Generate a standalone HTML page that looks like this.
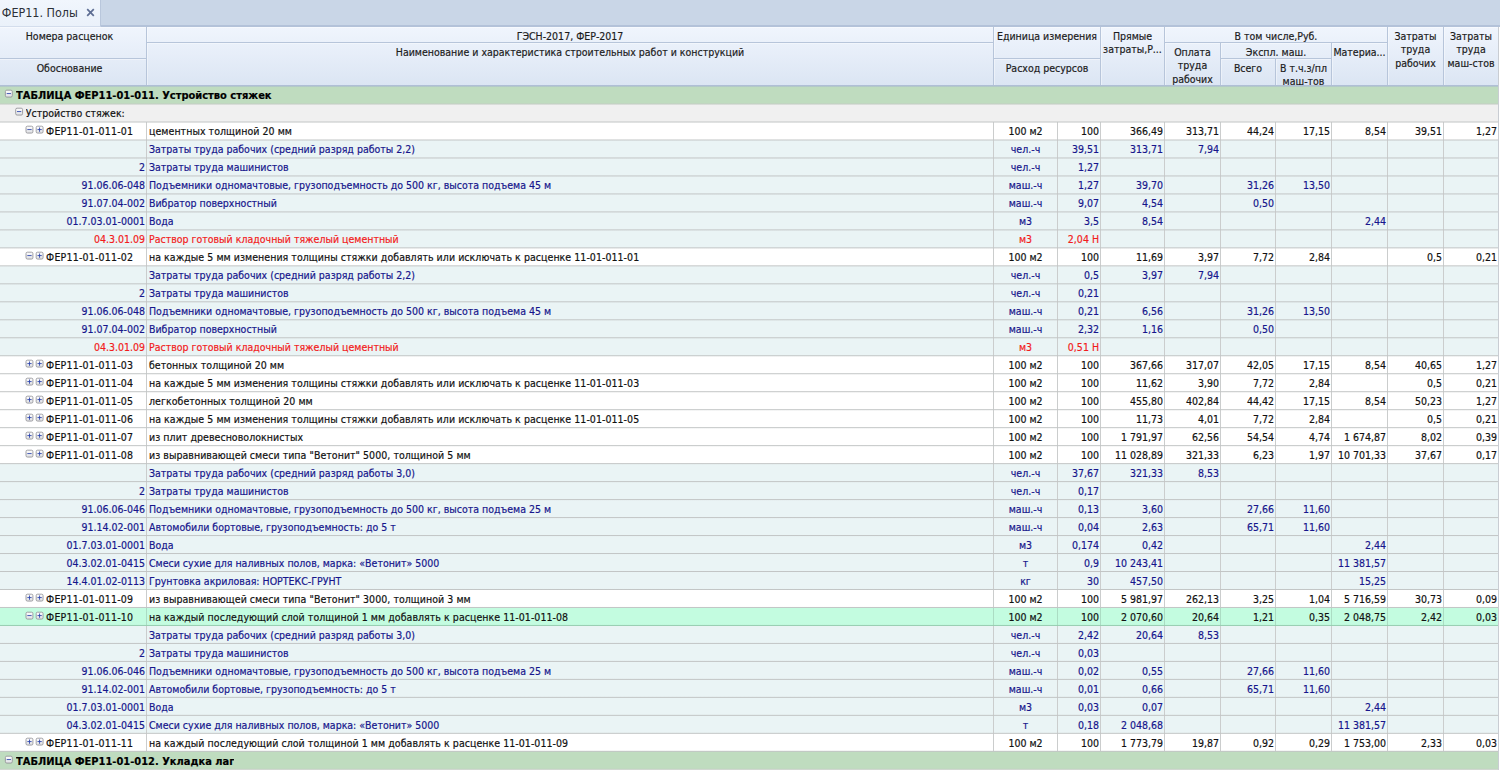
<!DOCTYPE html>
<html lang="ru"><head><meta charset="utf-8"><title>ФЕР11. Полы</title>
<style>
html,body{margin:0;padding:0}
html{width:1500px;height:770px;overflow:hidden}
body{-webkit-text-stroke:.18px currentColor;width:1500px;height:770px;overflow:hidden;position:relative;background:#fff;font-family:"DejaVu Sans Condensed","Liberation Sans",sans-serif;font-size:10.5px;color:#111}
div,span,b,i{box-sizing:border-box}
.tabbar{position:absolute;left:0;top:0;width:1500px;height:27px;background:#c9d6e7;border-bottom:2px solid #b3c2d9}
.tab{position:absolute;left:0;top:0;width:101px;height:27px;background:linear-gradient(#f1f6fd,#eaf1fa);border-right:1px solid #b9c7dc;border-bottom:1px solid #d3ddec;font-size:12.45px;-webkit-text-stroke:0;color:#2c3038;line-height:25px;padding-left:1.8px;white-space:nowrap}
.tab .x{position:absolute;left:86px;top:8px;width:9px;height:9px}
.hdr{position:absolute;left:0;top:27px;width:1499px;height:59px;background:linear-gradient(#f0f5fd,#dbe5f3)}
.hc{position:absolute;text-align:center;line-height:13.7px;padding-top:2.5px;white-space:nowrap;overflow:hidden;color:#1c1c1c;border-right:1px solid #b7c5da;border-bottom:1px solid #b7c5da;box-shadow:inset 1px 1px 0 rgba(255,255,255,.4)}
.row{position:absolute;left:0;width:1499px;white-space:nowrap}
.row.g{background:#bfdcbf;font-weight:bold;font-size:11px;color:#000}
.row.s{background:#f0f0f0}
.row.m{background:#fff}
.row.r,.row.x{background:#eaf4f5}
.row.r{color:#16168c}
.row.x{color:#f21c1c}
.row.h{background:#c3fce0}
.c{position:absolute;top:0;bottom:0;overflow:hidden;border-right:1px solid #cbcdcd}
.row.h .c{border-right-color:#abdcc3}
.row.m .al,.row.h .al{letter-spacing:.05px}
.t{position:absolute;top:0;bottom:0;overflow:hidden}
.ar{text-align:right;padding-right:1px}
.ac{text-align:center}
.al{text-align:left;padding-left:2px}
.ic{position:absolute;display:block;overflow:visible}
.hl{position:absolute;left:0;width:1499px;height:2px}
.vr{position:absolute;left:1498px;top:27px;width:1px;height:743px;background:#c9cdd3}
</style></head><body>

<svg width="0" height="0" style="position:absolute"><defs><linearGradient id="ig" x1="0" y1="0" x2="0" y2="1"><stop offset="0" stop-color="#ffffff"/><stop offset="1" stop-color="#dfe0e3"/></linearGradient></defs></svg>
<div class="tabbar"></div>
<div class="tab">ФЕР11. Полы<svg class="x" viewBox="0 0 9 9"><path d="M1.2 1.2L7.8 7.8M7.8 1.2L1.2 7.8" stroke="#5d6d93" stroke-width="1.7" fill="none"/></svg></div>
<div class="hdr">
<div class="hc" style="left:0px;top:0px;width:147px;height:32px;padding-right:7px;box-shadow:inset 0 1px 0 rgba(255,255,255,.4)">Номера расценок</div>
<div class="hc" style="left:0px;top:32px;width:147px;height:27px;padding-right:7px;box-shadow:inset 0 1px 0 rgba(255,255,255,.4)">Обоснование</div>
<div class="hc" style="left:147px;top:0px;width:847px;height:16px;">ГЭСН-2017, ФЕР-2017</div>
<div class="hc" style="left:147px;top:16px;width:847px;height:43px;">Наименование и характеристика строительных работ и конструкций</div>
<div class="hc" style="left:994px;top:0px;width:107px;height:32px;">Единица измерения</div>
<div class="hc" style="left:994px;top:32px;width:107px;height:27px;">Расход ресурсов</div>
<div class="hc" style="left:1101px;top:0px;width:64px;height:59px;">Прямые<br>затраты,Р...</div>
<div class="hc" style="left:1165px;top:0px;width:223px;height:16px;">В том числе,Руб.</div>
<div class="hc" style="left:1165px;top:16px;width:56px;height:43px;">Оплата<br>труда<br>рабочих</div>
<div class="hc" style="left:1221px;top:16px;width:111px;height:16px;">Экспл. маш.</div>
<div class="hc" style="left:1221px;top:32px;width:55px;height:27px;">Всего</div>
<div class="hc" style="left:1276px;top:32px;width:56px;height:27px;">В т.ч.з/пл<br>маш-тов</div>
<div class="hc" style="left:1332px;top:16px;width:56px;height:43px;">Материа...</div>
<div class="hc" style="left:1388px;top:0px;width:56px;height:59px;">Затраты<br>труда<br>рабочих</div>
<div class="hc" style="left:1444px;top:0px;width:55px;height:59px;">Затраты<br>труда<br>маш-стов</div>
</div>
<div class="row g" style="top:86px;height:18px;line-height:19px"><svg class="ic" style="left:4px;top:3px" width="10" height="10" viewBox="0 0 10 10"><g transform="translate(0.95 0.76) scale(.86)"><rect x=".5" y=".5" width="8" height="8" rx="1.6" fill="url(#ig)" stroke="#929296"/><rect x="2" y="4" width="5" height="1" fill="#2a42ac"/></g></svg><span class="t" style="left:16px">ТАБЛИЦА ФЕР11-01-011. Устройство стяжек</span></div>
<div class="row s" style="top:104px;height:18px;line-height:19px"><svg class="ic" style="left:15px;top:3px" width="10" height="10" viewBox="0 0 10 10"><g transform="translate(0.25 0.76) scale(.86)"><rect x=".5" y=".5" width="8" height="8" rx="1.6" fill="url(#ig)" stroke="#929296"/><rect x="2" y="4" width="5" height="1" fill="#2a42ac"/></g></svg><span class="t" style="left:25.8px">Устройство стяжек:</span></div>
<div class="row m" style="top:122px;height:18px;line-height:19px"><span class="c" style="left:0;width:147px"><svg class="ic" style="left:25px;top:3px" width="10" height="10" viewBox="0 0 10 10"><g transform="translate(0.6 0.76) scale(.86)"><rect x=".5" y=".5" width="8" height="8" rx="1.6" fill="url(#ig)" stroke="#929296"/><rect x="2" y="4" width="5" height="1" fill="#2a42ac"/></g></svg><svg class="ic" style="left:35px;top:3px" width="10" height="10" viewBox="0 0 10 10"><g transform="translate(0.75 0.76) scale(.86)"><rect x=".5" y=".5" width="8" height="8" rx="1.6" fill="url(#ig)" stroke="#929296"/><rect x="2" y="4" width="5" height="1" fill="#2a42ac"/><rect x="4" y="2" width="1" height="5" fill="#2a42ac"/></g></svg><span class="t" style="left:46.1px;letter-spacing:.2px">ФЕР11-01-011-01</span></span><span class="c al" style="left:147px;width:847px">цементных толщиной 20 мм</span><span class="c ac" style="left:994px;width:64px">100 м2</span><span class="c ar" style="left:1058px;width:43px">100</span><span class="c ar" style="left:1101px;width:64px">366,49</span><span class="c ar" style="left:1165px;width:56px">313,71</span><span class="c ar" style="left:1221px;width:55px">44,24</span><span class="c ar" style="left:1276px;width:56px">17,15</span><span class="c ar" style="left:1332px;width:56px">8,54</span><span class="c ar" style="left:1388px;width:56px">39,51</span><span class="c ar" style="left:1444px;width:55px">1,27</span></div>
<div class="row r" style="top:140px;height:18px;line-height:19px"><span class="c ar" style="left:0px;width:147px"></span><span class="c al" style="left:147px;width:847px">Затраты труда рабочих (средний разряд работы 2,2)</span><span class="c ac" style="left:994px;width:64px">чел.-ч</span><span class="c ar" style="left:1058px;width:43px">39,51</span><span class="c ar" style="left:1101px;width:64px">313,71</span><span class="c ar" style="left:1165px;width:56px">7,94</span><span class="c ar" style="left:1221px;width:55px"></span><span class="c ar" style="left:1276px;width:56px"></span><span class="c ar" style="left:1332px;width:56px"></span><span class="c ar" style="left:1388px;width:56px"></span><span class="c ar" style="left:1444px;width:55px"></span></div>
<div class="row r" style="top:158px;height:18px;line-height:19px"><span class="c ar" style="left:0px;width:147px">2</span><span class="c al" style="left:147px;width:847px">Затраты труда машинистов</span><span class="c ac" style="left:994px;width:64px">чел.-ч</span><span class="c ar" style="left:1058px;width:43px">1,27</span><span class="c ar" style="left:1101px;width:64px"></span><span class="c ar" style="left:1165px;width:56px"></span><span class="c ar" style="left:1221px;width:55px"></span><span class="c ar" style="left:1276px;width:56px"></span><span class="c ar" style="left:1332px;width:56px"></span><span class="c ar" style="left:1388px;width:56px"></span><span class="c ar" style="left:1444px;width:55px"></span></div>
<div class="row r" style="top:176px;height:18px;line-height:19px"><span class="c ar" style="left:0px;width:147px">91.06.06-048</span><span class="c al" style="left:147px;width:847px">Подъемники одномачтовые, грузоподъемность до 500 кг, высота подъема 45 м</span><span class="c ac" style="left:994px;width:64px">маш.-ч</span><span class="c ar" style="left:1058px;width:43px">1,27</span><span class="c ar" style="left:1101px;width:64px">39,70</span><span class="c ar" style="left:1165px;width:56px"></span><span class="c ar" style="left:1221px;width:55px">31,26</span><span class="c ar" style="left:1276px;width:56px">13,50</span><span class="c ar" style="left:1332px;width:56px"></span><span class="c ar" style="left:1388px;width:56px"></span><span class="c ar" style="left:1444px;width:55px"></span></div>
<div class="row r" style="top:194px;height:18px;line-height:19px"><span class="c ar" style="left:0px;width:147px">91.07.04-002</span><span class="c al" style="left:147px;width:847px">Вибратор поверхностный</span><span class="c ac" style="left:994px;width:64px">маш.-ч</span><span class="c ar" style="left:1058px;width:43px">9,07</span><span class="c ar" style="left:1101px;width:64px">4,54</span><span class="c ar" style="left:1165px;width:56px"></span><span class="c ar" style="left:1221px;width:55px">0,50</span><span class="c ar" style="left:1276px;width:56px"></span><span class="c ar" style="left:1332px;width:56px"></span><span class="c ar" style="left:1388px;width:56px"></span><span class="c ar" style="left:1444px;width:55px"></span></div>
<div class="row r" style="top:212px;height:18px;line-height:19px"><span class="c ar" style="left:0px;width:147px">01.7.03.01-0001</span><span class="c al" style="left:147px;width:847px">Вода</span><span class="c ac" style="left:994px;width:64px">м3</span><span class="c ar" style="left:1058px;width:43px">3,5</span><span class="c ar" style="left:1101px;width:64px">8,54</span><span class="c ar" style="left:1165px;width:56px"></span><span class="c ar" style="left:1221px;width:55px"></span><span class="c ar" style="left:1276px;width:56px"></span><span class="c ar" style="left:1332px;width:56px">2,44</span><span class="c ar" style="left:1388px;width:56px"></span><span class="c ar" style="left:1444px;width:55px"></span></div>
<div class="row x" style="top:230px;height:18px;line-height:19px"><span class="c ar" style="left:0px;width:147px">04.3.01.09</span><span class="c al" style="left:147px;width:847px">Раствор готовый кладочный тяжелый цементный</span><span class="c ac" style="left:994px;width:64px">м3</span><span class="c ar" style="left:1058px;width:43px">2,04 Н</span><span class="c ar" style="left:1101px;width:64px"></span><span class="c ar" style="left:1165px;width:56px"></span><span class="c ar" style="left:1221px;width:55px"></span><span class="c ar" style="left:1276px;width:56px"></span><span class="c ar" style="left:1332px;width:56px"></span><span class="c ar" style="left:1388px;width:56px"></span><span class="c ar" style="left:1444px;width:55px"></span></div>
<div class="row m" style="top:248px;height:18px;line-height:19px"><span class="c" style="left:0;width:147px"><svg class="ic" style="left:25px;top:3px" width="10" height="10" viewBox="0 0 10 10"><g transform="translate(0.6 0.76) scale(.86)"><rect x=".5" y=".5" width="8" height="8" rx="1.6" fill="url(#ig)" stroke="#929296"/><rect x="2" y="4" width="5" height="1" fill="#2a42ac"/></g></svg><svg class="ic" style="left:35px;top:3px" width="10" height="10" viewBox="0 0 10 10"><g transform="translate(0.75 0.76) scale(.86)"><rect x=".5" y=".5" width="8" height="8" rx="1.6" fill="url(#ig)" stroke="#929296"/><rect x="2" y="4" width="5" height="1" fill="#2a42ac"/><rect x="4" y="2" width="1" height="5" fill="#2a42ac"/></g></svg><span class="t" style="left:46.1px;letter-spacing:.2px">ФЕР11-01-011-02</span></span><span class="c al" style="left:147px;width:847px">на каждые 5 мм изменения толщины стяжки добавлять или исключать к расценке 11-01-011-01</span><span class="c ac" style="left:994px;width:64px">100 м2</span><span class="c ar" style="left:1058px;width:43px">100</span><span class="c ar" style="left:1101px;width:64px">11,69</span><span class="c ar" style="left:1165px;width:56px">3,97</span><span class="c ar" style="left:1221px;width:55px">7,72</span><span class="c ar" style="left:1276px;width:56px">2,84</span><span class="c ar" style="left:1332px;width:56px"></span><span class="c ar" style="left:1388px;width:56px">0,5</span><span class="c ar" style="left:1444px;width:55px">0,21</span></div>
<div class="row r" style="top:266px;height:18px;line-height:19px"><span class="c ar" style="left:0px;width:147px"></span><span class="c al" style="left:147px;width:847px">Затраты труда рабочих (средний разряд работы 2,2)</span><span class="c ac" style="left:994px;width:64px">чел.-ч</span><span class="c ar" style="left:1058px;width:43px">0,5</span><span class="c ar" style="left:1101px;width:64px">3,97</span><span class="c ar" style="left:1165px;width:56px">7,94</span><span class="c ar" style="left:1221px;width:55px"></span><span class="c ar" style="left:1276px;width:56px"></span><span class="c ar" style="left:1332px;width:56px"></span><span class="c ar" style="left:1388px;width:56px"></span><span class="c ar" style="left:1444px;width:55px"></span></div>
<div class="row r" style="top:284px;height:18px;line-height:19px"><span class="c ar" style="left:0px;width:147px">2</span><span class="c al" style="left:147px;width:847px">Затраты труда машинистов</span><span class="c ac" style="left:994px;width:64px">чел.-ч</span><span class="c ar" style="left:1058px;width:43px">0,21</span><span class="c ar" style="left:1101px;width:64px"></span><span class="c ar" style="left:1165px;width:56px"></span><span class="c ar" style="left:1221px;width:55px"></span><span class="c ar" style="left:1276px;width:56px"></span><span class="c ar" style="left:1332px;width:56px"></span><span class="c ar" style="left:1388px;width:56px"></span><span class="c ar" style="left:1444px;width:55px"></span></div>
<div class="row r" style="top:302px;height:18px;line-height:19px"><span class="c ar" style="left:0px;width:147px">91.06.06-048</span><span class="c al" style="left:147px;width:847px">Подъемники одномачтовые, грузоподъемность до 500 кг, высота подъема 45 м</span><span class="c ac" style="left:994px;width:64px">маш.-ч</span><span class="c ar" style="left:1058px;width:43px">0,21</span><span class="c ar" style="left:1101px;width:64px">6,56</span><span class="c ar" style="left:1165px;width:56px"></span><span class="c ar" style="left:1221px;width:55px">31,26</span><span class="c ar" style="left:1276px;width:56px">13,50</span><span class="c ar" style="left:1332px;width:56px"></span><span class="c ar" style="left:1388px;width:56px"></span><span class="c ar" style="left:1444px;width:55px"></span></div>
<div class="row r" style="top:320px;height:18px;line-height:19px"><span class="c ar" style="left:0px;width:147px">91.07.04-002</span><span class="c al" style="left:147px;width:847px">Вибратор поверхностный</span><span class="c ac" style="left:994px;width:64px">маш.-ч</span><span class="c ar" style="left:1058px;width:43px">2,32</span><span class="c ar" style="left:1101px;width:64px">1,16</span><span class="c ar" style="left:1165px;width:56px"></span><span class="c ar" style="left:1221px;width:55px">0,50</span><span class="c ar" style="left:1276px;width:56px"></span><span class="c ar" style="left:1332px;width:56px"></span><span class="c ar" style="left:1388px;width:56px"></span><span class="c ar" style="left:1444px;width:55px"></span></div>
<div class="row x" style="top:338px;height:18px;line-height:19px"><span class="c ar" style="left:0px;width:147px">04.3.01.09</span><span class="c al" style="left:147px;width:847px">Раствор готовый кладочный тяжелый цементный</span><span class="c ac" style="left:994px;width:64px">м3</span><span class="c ar" style="left:1058px;width:43px">0,51 Н</span><span class="c ar" style="left:1101px;width:64px"></span><span class="c ar" style="left:1165px;width:56px"></span><span class="c ar" style="left:1221px;width:55px"></span><span class="c ar" style="left:1276px;width:56px"></span><span class="c ar" style="left:1332px;width:56px"></span><span class="c ar" style="left:1388px;width:56px"></span><span class="c ar" style="left:1444px;width:55px"></span></div>
<div class="row m" style="top:356px;height:18px;line-height:19px"><span class="c" style="left:0;width:147px"><svg class="ic" style="left:25px;top:3px" width="10" height="10" viewBox="0 0 10 10"><g transform="translate(0.6 0.76) scale(.86)"><rect x=".5" y=".5" width="8" height="8" rx="1.6" fill="url(#ig)" stroke="#929296"/><rect x="2" y="4" width="5" height="1" fill="#2a42ac"/><rect x="4" y="2" width="1" height="5" fill="#2a42ac"/></g></svg><svg class="ic" style="left:35px;top:3px" width="10" height="10" viewBox="0 0 10 10"><g transform="translate(0.75 0.76) scale(.86)"><rect x=".5" y=".5" width="8" height="8" rx="1.6" fill="url(#ig)" stroke="#929296"/><rect x="2" y="4" width="5" height="1" fill="#2a42ac"/><rect x="4" y="2" width="1" height="5" fill="#2a42ac"/></g></svg><span class="t" style="left:46.1px;letter-spacing:.2px">ФЕР11-01-011-03</span></span><span class="c al" style="left:147px;width:847px">бетонных толщиной 20 мм</span><span class="c ac" style="left:994px;width:64px">100 м2</span><span class="c ar" style="left:1058px;width:43px">100</span><span class="c ar" style="left:1101px;width:64px">367,66</span><span class="c ar" style="left:1165px;width:56px">317,07</span><span class="c ar" style="left:1221px;width:55px">42,05</span><span class="c ar" style="left:1276px;width:56px">17,15</span><span class="c ar" style="left:1332px;width:56px">8,54</span><span class="c ar" style="left:1388px;width:56px">40,65</span><span class="c ar" style="left:1444px;width:55px">1,27</span></div>
<div class="row m" style="top:374px;height:18px;line-height:19px"><span class="c" style="left:0;width:147px"><svg class="ic" style="left:25px;top:3px" width="10" height="10" viewBox="0 0 10 10"><g transform="translate(0.6 0.76) scale(.86)"><rect x=".5" y=".5" width="8" height="8" rx="1.6" fill="url(#ig)" stroke="#929296"/><rect x="2" y="4" width="5" height="1" fill="#2a42ac"/><rect x="4" y="2" width="1" height="5" fill="#2a42ac"/></g></svg><svg class="ic" style="left:35px;top:3px" width="10" height="10" viewBox="0 0 10 10"><g transform="translate(0.75 0.76) scale(.86)"><rect x=".5" y=".5" width="8" height="8" rx="1.6" fill="url(#ig)" stroke="#929296"/><rect x="2" y="4" width="5" height="1" fill="#2a42ac"/><rect x="4" y="2" width="1" height="5" fill="#2a42ac"/></g></svg><span class="t" style="left:46.1px;letter-spacing:.2px">ФЕР11-01-011-04</span></span><span class="c al" style="left:147px;width:847px">на каждые 5 мм изменения толщины стяжки добавлять или исключать к расценке 11-01-011-03</span><span class="c ac" style="left:994px;width:64px">100 м2</span><span class="c ar" style="left:1058px;width:43px">100</span><span class="c ar" style="left:1101px;width:64px">11,62</span><span class="c ar" style="left:1165px;width:56px">3,90</span><span class="c ar" style="left:1221px;width:55px">7,72</span><span class="c ar" style="left:1276px;width:56px">2,84</span><span class="c ar" style="left:1332px;width:56px"></span><span class="c ar" style="left:1388px;width:56px">0,5</span><span class="c ar" style="left:1444px;width:55px">0,21</span></div>
<div class="row m" style="top:392px;height:18px;line-height:19px"><span class="c" style="left:0;width:147px"><svg class="ic" style="left:25px;top:3px" width="10" height="10" viewBox="0 0 10 10"><g transform="translate(0.6 0.76) scale(.86)"><rect x=".5" y=".5" width="8" height="8" rx="1.6" fill="url(#ig)" stroke="#929296"/><rect x="2" y="4" width="5" height="1" fill="#2a42ac"/><rect x="4" y="2" width="1" height="5" fill="#2a42ac"/></g></svg><svg class="ic" style="left:35px;top:3px" width="10" height="10" viewBox="0 0 10 10"><g transform="translate(0.75 0.76) scale(.86)"><rect x=".5" y=".5" width="8" height="8" rx="1.6" fill="url(#ig)" stroke="#929296"/><rect x="2" y="4" width="5" height="1" fill="#2a42ac"/><rect x="4" y="2" width="1" height="5" fill="#2a42ac"/></g></svg><span class="t" style="left:46.1px;letter-spacing:.2px">ФЕР11-01-011-05</span></span><span class="c al" style="left:147px;width:847px">легкобетонных толщиной 20 мм</span><span class="c ac" style="left:994px;width:64px">100 м2</span><span class="c ar" style="left:1058px;width:43px">100</span><span class="c ar" style="left:1101px;width:64px">455,80</span><span class="c ar" style="left:1165px;width:56px">402,84</span><span class="c ar" style="left:1221px;width:55px">44,42</span><span class="c ar" style="left:1276px;width:56px">17,15</span><span class="c ar" style="left:1332px;width:56px">8,54</span><span class="c ar" style="left:1388px;width:56px">50,23</span><span class="c ar" style="left:1444px;width:55px">1,27</span></div>
<div class="row m" style="top:410px;height:18px;line-height:19px"><span class="c" style="left:0;width:147px"><svg class="ic" style="left:25px;top:3px" width="10" height="10" viewBox="0 0 10 10"><g transform="translate(0.6 0.76) scale(.86)"><rect x=".5" y=".5" width="8" height="8" rx="1.6" fill="url(#ig)" stroke="#929296"/><rect x="2" y="4" width="5" height="1" fill="#2a42ac"/><rect x="4" y="2" width="1" height="5" fill="#2a42ac"/></g></svg><svg class="ic" style="left:35px;top:3px" width="10" height="10" viewBox="0 0 10 10"><g transform="translate(0.75 0.76) scale(.86)"><rect x=".5" y=".5" width="8" height="8" rx="1.6" fill="url(#ig)" stroke="#929296"/><rect x="2" y="4" width="5" height="1" fill="#2a42ac"/><rect x="4" y="2" width="1" height="5" fill="#2a42ac"/></g></svg><span class="t" style="left:46.1px;letter-spacing:.2px">ФЕР11-01-011-06</span></span><span class="c al" style="left:147px;width:847px">на каждые 5 мм изменения толщины стяжки добавлять или исключать к расценке 11-01-011-05</span><span class="c ac" style="left:994px;width:64px">100 м2</span><span class="c ar" style="left:1058px;width:43px">100</span><span class="c ar" style="left:1101px;width:64px">11,73</span><span class="c ar" style="left:1165px;width:56px">4,01</span><span class="c ar" style="left:1221px;width:55px">7,72</span><span class="c ar" style="left:1276px;width:56px">2,84</span><span class="c ar" style="left:1332px;width:56px"></span><span class="c ar" style="left:1388px;width:56px">0,5</span><span class="c ar" style="left:1444px;width:55px">0,21</span></div>
<div class="row m" style="top:428px;height:18px;line-height:19px"><span class="c" style="left:0;width:147px"><svg class="ic" style="left:25px;top:3px" width="10" height="10" viewBox="0 0 10 10"><g transform="translate(0.6 0.76) scale(.86)"><rect x=".5" y=".5" width="8" height="8" rx="1.6" fill="url(#ig)" stroke="#929296"/><rect x="2" y="4" width="5" height="1" fill="#2a42ac"/><rect x="4" y="2" width="1" height="5" fill="#2a42ac"/></g></svg><svg class="ic" style="left:35px;top:3px" width="10" height="10" viewBox="0 0 10 10"><g transform="translate(0.75 0.76) scale(.86)"><rect x=".5" y=".5" width="8" height="8" rx="1.6" fill="url(#ig)" stroke="#929296"/><rect x="2" y="4" width="5" height="1" fill="#2a42ac"/><rect x="4" y="2" width="1" height="5" fill="#2a42ac"/></g></svg><span class="t" style="left:46.1px;letter-spacing:.2px">ФЕР11-01-011-07</span></span><span class="c al" style="left:147px;width:847px">из плит древесноволокнистых</span><span class="c ac" style="left:994px;width:64px">100 м2</span><span class="c ar" style="left:1058px;width:43px">100</span><span class="c ar" style="left:1101px;width:64px">1 791,97</span><span class="c ar" style="left:1165px;width:56px">62,56</span><span class="c ar" style="left:1221px;width:55px">54,54</span><span class="c ar" style="left:1276px;width:56px">4,74</span><span class="c ar" style="left:1332px;width:56px">1 674,87</span><span class="c ar" style="left:1388px;width:56px">8,02</span><span class="c ar" style="left:1444px;width:55px">0,39</span></div>
<div class="row m" style="top:446px;height:18px;line-height:19px"><span class="c" style="left:0;width:147px"><svg class="ic" style="left:25px;top:3px" width="10" height="10" viewBox="0 0 10 10"><g transform="translate(0.6 0.76) scale(.86)"><rect x=".5" y=".5" width="8" height="8" rx="1.6" fill="url(#ig)" stroke="#929296"/><rect x="2" y="4" width="5" height="1" fill="#2a42ac"/></g></svg><svg class="ic" style="left:35px;top:3px" width="10" height="10" viewBox="0 0 10 10"><g transform="translate(0.75 0.76) scale(.86)"><rect x=".5" y=".5" width="8" height="8" rx="1.6" fill="url(#ig)" stroke="#929296"/><rect x="2" y="4" width="5" height="1" fill="#2a42ac"/><rect x="4" y="2" width="1" height="5" fill="#2a42ac"/></g></svg><span class="t" style="left:46.1px;letter-spacing:.2px">ФЕР11-01-011-08</span></span><span class="c al" style="left:147px;width:847px">из выравнивающей смеси типа "Ветонит" 5000, толщиной 5 мм</span><span class="c ac" style="left:994px;width:64px">100 м2</span><span class="c ar" style="left:1058px;width:43px">100</span><span class="c ar" style="left:1101px;width:64px">11 028,89</span><span class="c ar" style="left:1165px;width:56px">321,33</span><span class="c ar" style="left:1221px;width:55px">6,23</span><span class="c ar" style="left:1276px;width:56px">1,97</span><span class="c ar" style="left:1332px;width:56px">10 701,33</span><span class="c ar" style="left:1388px;width:56px">37,67</span><span class="c ar" style="left:1444px;width:55px">0,17</span></div>
<div class="row r" style="top:464px;height:18px;line-height:19px"><span class="c ar" style="left:0px;width:147px"></span><span class="c al" style="left:147px;width:847px">Затраты труда рабочих (средний разряд работы 3,0)</span><span class="c ac" style="left:994px;width:64px">чел.-ч</span><span class="c ar" style="left:1058px;width:43px">37,67</span><span class="c ar" style="left:1101px;width:64px">321,33</span><span class="c ar" style="left:1165px;width:56px">8,53</span><span class="c ar" style="left:1221px;width:55px"></span><span class="c ar" style="left:1276px;width:56px"></span><span class="c ar" style="left:1332px;width:56px"></span><span class="c ar" style="left:1388px;width:56px"></span><span class="c ar" style="left:1444px;width:55px"></span></div>
<div class="row r" style="top:482px;height:18px;line-height:19px"><span class="c ar" style="left:0px;width:147px">2</span><span class="c al" style="left:147px;width:847px">Затраты труда машинистов</span><span class="c ac" style="left:994px;width:64px">чел.-ч</span><span class="c ar" style="left:1058px;width:43px">0,17</span><span class="c ar" style="left:1101px;width:64px"></span><span class="c ar" style="left:1165px;width:56px"></span><span class="c ar" style="left:1221px;width:55px"></span><span class="c ar" style="left:1276px;width:56px"></span><span class="c ar" style="left:1332px;width:56px"></span><span class="c ar" style="left:1388px;width:56px"></span><span class="c ar" style="left:1444px;width:55px"></span></div>
<div class="row r" style="top:500px;height:18px;line-height:19px"><span class="c ar" style="left:0px;width:147px">91.06.06-046</span><span class="c al" style="left:147px;width:847px">Подъемники одномачтовые, грузоподъемность до 500 кг, высота подъема 25 м</span><span class="c ac" style="left:994px;width:64px">маш.-ч</span><span class="c ar" style="left:1058px;width:43px">0,13</span><span class="c ar" style="left:1101px;width:64px">3,60</span><span class="c ar" style="left:1165px;width:56px"></span><span class="c ar" style="left:1221px;width:55px">27,66</span><span class="c ar" style="left:1276px;width:56px">11,60</span><span class="c ar" style="left:1332px;width:56px"></span><span class="c ar" style="left:1388px;width:56px"></span><span class="c ar" style="left:1444px;width:55px"></span></div>
<div class="row r" style="top:518px;height:18px;line-height:19px"><span class="c ar" style="left:0px;width:147px">91.14.02-001</span><span class="c al" style="left:147px;width:847px">Автомобили бортовые, грузоподъемность: до 5 т</span><span class="c ac" style="left:994px;width:64px">маш.-ч</span><span class="c ar" style="left:1058px;width:43px">0,04</span><span class="c ar" style="left:1101px;width:64px">2,63</span><span class="c ar" style="left:1165px;width:56px"></span><span class="c ar" style="left:1221px;width:55px">65,71</span><span class="c ar" style="left:1276px;width:56px">11,60</span><span class="c ar" style="left:1332px;width:56px"></span><span class="c ar" style="left:1388px;width:56px"></span><span class="c ar" style="left:1444px;width:55px"></span></div>
<div class="row r" style="top:536px;height:18px;line-height:19px"><span class="c ar" style="left:0px;width:147px">01.7.03.01-0001</span><span class="c al" style="left:147px;width:847px">Вода</span><span class="c ac" style="left:994px;width:64px">м3</span><span class="c ar" style="left:1058px;width:43px">0,174</span><span class="c ar" style="left:1101px;width:64px">0,42</span><span class="c ar" style="left:1165px;width:56px"></span><span class="c ar" style="left:1221px;width:55px"></span><span class="c ar" style="left:1276px;width:56px"></span><span class="c ar" style="left:1332px;width:56px">2,44</span><span class="c ar" style="left:1388px;width:56px"></span><span class="c ar" style="left:1444px;width:55px"></span></div>
<div class="row r" style="top:554px;height:18px;line-height:19px"><span class="c ar" style="left:0px;width:147px">04.3.02.01-0415</span><span class="c al" style="left:147px;width:847px">Смеси сухие для наливных полов, марка: «Ветонит» 5000</span><span class="c ac" style="left:994px;width:64px">т</span><span class="c ar" style="left:1058px;width:43px">0,9</span><span class="c ar" style="left:1101px;width:64px">10 243,41</span><span class="c ar" style="left:1165px;width:56px"></span><span class="c ar" style="left:1221px;width:55px"></span><span class="c ar" style="left:1276px;width:56px"></span><span class="c ar" style="left:1332px;width:56px">11 381,57</span><span class="c ar" style="left:1388px;width:56px"></span><span class="c ar" style="left:1444px;width:55px"></span></div>
<div class="row r" style="top:572px;height:17px;line-height:19px"><span class="c ar" style="left:0px;width:147px">14.4.01.02-0113</span><span class="c al" style="left:147px;width:847px">Грунтовка акриловая: НОРТЕКС-ГРУНТ</span><span class="c ac" style="left:994px;width:64px">кг</span><span class="c ar" style="left:1058px;width:43px">30</span><span class="c ar" style="left:1101px;width:64px">457,50</span><span class="c ar" style="left:1165px;width:56px"></span><span class="c ar" style="left:1221px;width:55px"></span><span class="c ar" style="left:1276px;width:56px"></span><span class="c ar" style="left:1332px;width:56px">15,25</span><span class="c ar" style="left:1388px;width:56px"></span><span class="c ar" style="left:1444px;width:55px"></span></div>
<div class="row m" style="top:589px;height:18px;line-height:21px"><span class="c" style="left:0;width:147px"><svg class="ic" style="left:25px;top:4px" width="10" height="10" viewBox="0 0 10 10"><g transform="translate(0.6 0.76) scale(.86)"><rect x=".5" y=".5" width="8" height="8" rx="1.6" fill="url(#ig)" stroke="#929296"/><rect x="2" y="4" width="5" height="1" fill="#2a42ac"/><rect x="4" y="2" width="1" height="5" fill="#2a42ac"/></g></svg><svg class="ic" style="left:35px;top:4px" width="10" height="10" viewBox="0 0 10 10"><g transform="translate(0.75 0.76) scale(.86)"><rect x=".5" y=".5" width="8" height="8" rx="1.6" fill="url(#ig)" stroke="#929296"/><rect x="2" y="4" width="5" height="1" fill="#2a42ac"/><rect x="4" y="2" width="1" height="5" fill="#2a42ac"/></g></svg><span class="t" style="left:46.1px;letter-spacing:.2px">ФЕР11-01-011-09</span></span><span class="c al" style="left:147px;width:847px">из выравнивающей смеси типа "Ветонит" 3000, толщиной 3 мм</span><span class="c ac" style="left:994px;width:64px">100 м2</span><span class="c ar" style="left:1058px;width:43px">100</span><span class="c ar" style="left:1101px;width:64px">5 981,97</span><span class="c ar" style="left:1165px;width:56px">262,13</span><span class="c ar" style="left:1221px;width:55px">3,25</span><span class="c ar" style="left:1276px;width:56px">1,04</span><span class="c ar" style="left:1332px;width:56px">5 716,59</span><span class="c ar" style="left:1388px;width:56px">30,73</span><span class="c ar" style="left:1444px;width:55px">0,09</span></div>
<div class="row h" style="top:607px;height:18px;line-height:21px"><span class="c" style="left:0;width:147px"><svg class="ic" style="left:25px;top:4px" width="10" height="10" viewBox="0 0 10 10"><g transform="translate(0.6 0.76) scale(.86)"><rect x=".5" y=".5" width="8" height="8" rx="1.6" fill="url(#ig)" stroke="#929296"/><rect x="2" y="4" width="5" height="1" fill="#2a42ac"/></g></svg><svg class="ic" style="left:35px;top:4px" width="10" height="10" viewBox="0 0 10 10"><g transform="translate(0.75 0.76) scale(.86)"><rect x=".5" y=".5" width="8" height="8" rx="1.6" fill="url(#ig)" stroke="#929296"/><rect x="2" y="4" width="5" height="1" fill="#2a42ac"/><rect x="4" y="2" width="1" height="5" fill="#2a42ac"/></g></svg><span class="t" style="left:46.1px;letter-spacing:.2px">ФЕР11-01-011-10</span></span><span class="c al" style="left:147px;width:847px">на каждый последующий слой толщиной 1 мм добавлять к расценке 11-01-011-08</span><span class="c ac" style="left:994px;width:64px">100 м2</span><span class="c ar" style="left:1058px;width:43px">100</span><span class="c ar" style="left:1101px;width:64px">2 070,60</span><span class="c ar" style="left:1165px;width:56px">20,64</span><span class="c ar" style="left:1221px;width:55px">1,21</span><span class="c ar" style="left:1276px;width:56px">0,35</span><span class="c ar" style="left:1332px;width:56px">2 048,75</span><span class="c ar" style="left:1388px;width:56px">2,42</span><span class="c ar" style="left:1444px;width:55px">0,03</span></div>
<div class="row r" style="top:625px;height:18px;line-height:21px"><span class="c ar" style="left:0px;width:147px"></span><span class="c al" style="left:147px;width:847px">Затраты труда рабочих (средний разряд работы 3,0)</span><span class="c ac" style="left:994px;width:64px">чел.-ч</span><span class="c ar" style="left:1058px;width:43px">2,42</span><span class="c ar" style="left:1101px;width:64px">20,64</span><span class="c ar" style="left:1165px;width:56px">8,53</span><span class="c ar" style="left:1221px;width:55px"></span><span class="c ar" style="left:1276px;width:56px"></span><span class="c ar" style="left:1332px;width:56px"></span><span class="c ar" style="left:1388px;width:56px"></span><span class="c ar" style="left:1444px;width:55px"></span></div>
<div class="row r" style="top:643px;height:18px;line-height:21px"><span class="c ar" style="left:0px;width:147px">2</span><span class="c al" style="left:147px;width:847px">Затраты труда машинистов</span><span class="c ac" style="left:994px;width:64px">чел.-ч</span><span class="c ar" style="left:1058px;width:43px">0,03</span><span class="c ar" style="left:1101px;width:64px"></span><span class="c ar" style="left:1165px;width:56px"></span><span class="c ar" style="left:1221px;width:55px"></span><span class="c ar" style="left:1276px;width:56px"></span><span class="c ar" style="left:1332px;width:56px"></span><span class="c ar" style="left:1388px;width:56px"></span><span class="c ar" style="left:1444px;width:55px"></span></div>
<div class="row r" style="top:661px;height:18px;line-height:21px"><span class="c ar" style="left:0px;width:147px">91.06.06-046</span><span class="c al" style="left:147px;width:847px">Подъемники одномачтовые, грузоподъемность до 500 кг, высота подъема 25 м</span><span class="c ac" style="left:994px;width:64px">маш.-ч</span><span class="c ar" style="left:1058px;width:43px">0,02</span><span class="c ar" style="left:1101px;width:64px">0,55</span><span class="c ar" style="left:1165px;width:56px"></span><span class="c ar" style="left:1221px;width:55px">27,66</span><span class="c ar" style="left:1276px;width:56px">11,60</span><span class="c ar" style="left:1332px;width:56px"></span><span class="c ar" style="left:1388px;width:56px"></span><span class="c ar" style="left:1444px;width:55px"></span></div>
<div class="row r" style="top:679px;height:18px;line-height:21px"><span class="c ar" style="left:0px;width:147px">91.14.02-001</span><span class="c al" style="left:147px;width:847px">Автомобили бортовые, грузоподъемность: до 5 т</span><span class="c ac" style="left:994px;width:64px">маш.-ч</span><span class="c ar" style="left:1058px;width:43px">0,01</span><span class="c ar" style="left:1101px;width:64px">0,66</span><span class="c ar" style="left:1165px;width:56px"></span><span class="c ar" style="left:1221px;width:55px">65,71</span><span class="c ar" style="left:1276px;width:56px">11,60</span><span class="c ar" style="left:1332px;width:56px"></span><span class="c ar" style="left:1388px;width:56px"></span><span class="c ar" style="left:1444px;width:55px"></span></div>
<div class="row r" style="top:697px;height:18px;line-height:21px"><span class="c ar" style="left:0px;width:147px">01.7.03.01-0001</span><span class="c al" style="left:147px;width:847px">Вода</span><span class="c ac" style="left:994px;width:64px">м3</span><span class="c ar" style="left:1058px;width:43px">0,03</span><span class="c ar" style="left:1101px;width:64px">0,07</span><span class="c ar" style="left:1165px;width:56px"></span><span class="c ar" style="left:1221px;width:55px"></span><span class="c ar" style="left:1276px;width:56px"></span><span class="c ar" style="left:1332px;width:56px">2,44</span><span class="c ar" style="left:1388px;width:56px"></span><span class="c ar" style="left:1444px;width:55px"></span></div>
<div class="row r" style="top:715px;height:18px;line-height:21px"><span class="c ar" style="left:0px;width:147px">04.3.02.01-0415</span><span class="c al" style="left:147px;width:847px">Смеси сухие для наливных полов, марка: «Ветонит» 5000</span><span class="c ac" style="left:994px;width:64px">т</span><span class="c ar" style="left:1058px;width:43px">0,18</span><span class="c ar" style="left:1101px;width:64px">2 048,68</span><span class="c ar" style="left:1165px;width:56px"></span><span class="c ar" style="left:1221px;width:55px"></span><span class="c ar" style="left:1276px;width:56px"></span><span class="c ar" style="left:1332px;width:56px">11 381,57</span><span class="c ar" style="left:1388px;width:56px"></span><span class="c ar" style="left:1444px;width:55px"></span></div>
<div class="row m" style="top:733px;height:18px;line-height:21px"><span class="c" style="left:0;width:147px"><svg class="ic" style="left:25px;top:4px" width="10" height="10" viewBox="0 0 10 10"><g transform="translate(0.6 0.76) scale(.86)"><rect x=".5" y=".5" width="8" height="8" rx="1.6" fill="url(#ig)" stroke="#929296"/><rect x="2" y="4" width="5" height="1" fill="#2a42ac"/><rect x="4" y="2" width="1" height="5" fill="#2a42ac"/></g></svg><svg class="ic" style="left:35px;top:4px" width="10" height="10" viewBox="0 0 10 10"><g transform="translate(0.75 0.76) scale(.86)"><rect x=".5" y=".5" width="8" height="8" rx="1.6" fill="url(#ig)" stroke="#929296"/><rect x="2" y="4" width="5" height="1" fill="#2a42ac"/><rect x="4" y="2" width="1" height="5" fill="#2a42ac"/></g></svg><span class="t" style="left:46.1px;letter-spacing:.2px">ФЕР11-01-011-11</span></span><span class="c al" style="left:147px;width:847px">на каждый последующий слой толщиной 1 мм добавлять к расценке 11-01-011-09</span><span class="c ac" style="left:994px;width:64px">100 м2</span><span class="c ar" style="left:1058px;width:43px">100</span><span class="c ar" style="left:1101px;width:64px">1 773,79</span><span class="c ar" style="left:1165px;width:56px">19,87</span><span class="c ar" style="left:1221px;width:55px">0,92</span><span class="c ar" style="left:1276px;width:56px">0,29</span><span class="c ar" style="left:1332px;width:56px">1 753,00</span><span class="c ar" style="left:1388px;width:56px">2,33</span><span class="c ar" style="left:1444px;width:55px">0,03</span></div>
<div class="row g" style="top:751px;height:18px;line-height:21px"><svg class="ic" style="left:4px;top:4px" width="10" height="10" viewBox="0 0 10 10"><g transform="translate(0.95 0.76) scale(.86)"><rect x=".5" y=".5" width="8" height="8" rx="1.6" fill="url(#ig)" stroke="#929296"/><rect x="2" y="4" width="5" height="1" fill="#2a42ac"/></g></svg><span class="t" style="left:16px">ТАБЛИЦА ФЕР11-01-012. Укладка лаг</span></div>
<div class="hl" style="top:85px;background:linear-gradient(rgba(168,184,208,0.45) 50%,rgba(168,184,208,0.55) 50%)"></div>
<div class="hl" style="top:103px;background:linear-gradient(rgba(196,204,196,0.47) 50%,rgba(196,204,196,0.53) 50%)"></div>
<div class="hl" style="top:121px;background:linear-gradient(rgba(194,197,197,0.49) 50%,rgba(194,197,197,0.51) 50%)"></div>
<div class="hl" style="top:139px;background:linear-gradient(rgba(194,197,197,0.51) 50%,rgba(194,197,197,0.49) 50%)"></div>
<div class="hl" style="top:157px;background:linear-gradient(rgba(194,197,197,0.53) 50%,rgba(194,197,197,0.47) 50%)"></div>
<div class="hl" style="top:175px;background:linear-gradient(rgba(194,197,197,0.55) 50%,rgba(194,197,197,0.45) 50%)"></div>
<div class="hl" style="top:193px;background:linear-gradient(rgba(194,197,197,0.57) 50%,rgba(194,197,197,0.43) 50%)"></div>
<div class="hl" style="top:211px;background:linear-gradient(rgba(194,197,197,0.59) 50%,rgba(194,197,197,0.41) 50%)"></div>
<div class="hl" style="top:229px;background:linear-gradient(rgba(194,197,197,0.61) 50%,rgba(194,197,197,0.39) 50%)"></div>
<div class="hl" style="top:247px;background:linear-gradient(rgba(194,197,197,0.63) 50%,rgba(194,197,197,0.37) 50%)"></div>
<div class="hl" style="top:265px;background:linear-gradient(rgba(194,197,197,0.65) 50%,rgba(194,197,197,0.35) 50%)"></div>
<div class="hl" style="top:283px;background:linear-gradient(rgba(194,197,197,0.67) 50%,rgba(194,197,197,0.33) 50%)"></div>
<div class="hl" style="top:301px;background:linear-gradient(rgba(194,197,197,0.69) 50%,rgba(194,197,197,0.31) 50%)"></div>
<div class="hl" style="top:319px;background:linear-gradient(rgba(194,197,197,0.71) 50%,rgba(194,197,197,0.29) 50%)"></div>
<div class="hl" style="top:337px;background:linear-gradient(rgba(194,197,197,0.73) 50%,rgba(194,197,197,0.27) 50%)"></div>
<div class="hl" style="top:355px;background:linear-gradient(rgba(194,197,197,0.75) 50%,rgba(194,197,197,0.25) 50%)"></div>
<div class="hl" style="top:373px;background:linear-gradient(rgba(194,197,197,0.77) 50%,rgba(194,197,197,0.23) 50%)"></div>
<div class="hl" style="top:391px;background:linear-gradient(rgba(194,197,197,0.79) 50%,rgba(194,197,197,0.21) 50%)"></div>
<div class="hl" style="top:409px;background:linear-gradient(rgba(194,197,197,0.81) 50%,rgba(194,197,197,0.19) 50%)"></div>
<div class="hl" style="top:427px;background:linear-gradient(rgba(194,197,197,0.83) 50%,rgba(194,197,197,0.17) 50%)"></div>
<div class="hl" style="top:445px;background:linear-gradient(rgba(194,197,197,0.85) 50%,rgba(194,197,197,0.15) 50%)"></div>
<div class="hl" style="top:463px;background:linear-gradient(rgba(194,197,197,0.87) 50%,rgba(194,197,197,0.13) 50%)"></div>
<div class="hl" style="top:481px;background:linear-gradient(rgba(194,197,197,0.89) 50%,rgba(194,197,197,0.11) 50%)"></div>
<div class="hl" style="top:499px;background:linear-gradient(rgba(194,197,197,0.91) 50%,rgba(194,197,197,0.09) 50%)"></div>
<div class="hl" style="top:517px;background:linear-gradient(rgba(194,197,197,0.93) 50%,rgba(194,197,197,0.07) 50%)"></div>
<div class="hl" style="top:535px;background:linear-gradient(rgba(194,197,197,0.95) 50%,rgba(194,197,197,0.05) 50%)"></div>
<div class="hl" style="top:553px;background:linear-gradient(rgba(194,197,197,0.97) 50%,rgba(194,197,197,0.03) 50%)"></div>
<div class="hl" style="top:571px;background:linear-gradient(rgba(194,197,197,0.99) 50%,rgba(194,197,197,0.01) 50%)"></div>
<div class="hl" style="top:588px;background:linear-gradient(rgba(194,197,197,0.01) 50%,rgba(194,197,197,0.99) 50%)"></div>
<div class="hl" style="top:606px;background:linear-gradient(rgba(194,197,197,0.03) 50%,rgba(194,197,197,0.97) 50%)"></div>
<div class="hl" style="top:624px;background:linear-gradient(rgba(150,205,176,0.05) 50%,rgba(150,205,176,0.95) 50%)"></div>
<div class="hl" style="top:642px;background:linear-gradient(rgba(194,197,197,0.07) 50%,rgba(194,197,197,0.93) 50%)"></div>
<div class="hl" style="top:660px;background:linear-gradient(rgba(194,197,197,0.09) 50%,rgba(194,197,197,0.91) 50%)"></div>
<div class="hl" style="top:678px;background:linear-gradient(rgba(194,197,197,0.11) 50%,rgba(194,197,197,0.89) 50%)"></div>
<div class="hl" style="top:696px;background:linear-gradient(rgba(194,197,197,0.13) 50%,rgba(194,197,197,0.87) 50%)"></div>
<div class="hl" style="top:714px;background:linear-gradient(rgba(194,197,197,0.15) 50%,rgba(194,197,197,0.85) 50%)"></div>
<div class="hl" style="top:732px;background:linear-gradient(rgba(194,197,197,0.17) 50%,rgba(194,197,197,0.83) 50%)"></div>
<div class="hl" style="top:750px;background:linear-gradient(rgba(194,197,197,0.19) 50%,rgba(194,197,197,0.81) 50%)"></div>
<div class="hl" style="top:768px;background:linear-gradient(rgba(196,204,196,0.21) 50%,rgba(196,204,196,0.79) 50%)"></div>
<div class="vr"></div>
</body></html>
